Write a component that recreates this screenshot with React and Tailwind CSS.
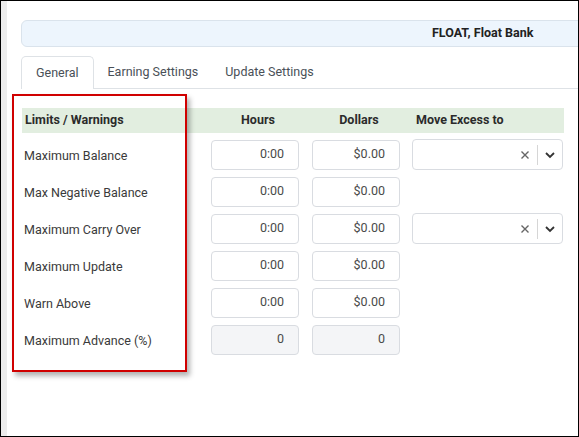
const rows = [
  { label: "Maximum Balance", hours: "0:00", dollars: "$0.00", select: true },
  { label: "Max Negative Balance", hours: "0:00", dollars: "$0.00" },
  { label: "Maximum Carry Over", hours: "0:00", dollars: "$0.00", select: true },
  { label: "Maximum Update", hours: "0:00", dollars: "$0.00" },
  { label: "Warn Above", hours: "0:00", dollars: "$0.00" },
  { label: "Maximum Advance (%)", hours: "0", dollars: "0", disabled: true },
];

const Field = ({ value, disabled }) => (
  <div
    className={`w-[88px] h-[30px] flex items-center justify-end pr-[14px] rounded-[4px] border border-[#d9dce1] text-[12.5px] text-[#4a4a4a] ${
      disabled ? "bg-[#f4f5f7]" : "bg-white"
    }`}
  >
    {value}
  </div>
);

const ExcessSelect = () => (
  <div className="w-[151px] h-[31px] flex items-center justify-end rounded-[4px] border border-[#d9dce1] bg-white">
    <svg width="10" height="10" viewBox="0 0 10 10" className="mr-[7px]">
      <path d="M1.5 1.5 L8.5 8.5 M8.5 1.5 L1.5 8.5" stroke="#666" strokeWidth="1.4" />
    </svg>
    <div className="w-px h-[20px] bg-[#d6d6d6]" />
    <svg width="12" height="8" viewBox="0 0 12 8" className="mx-[6px]">
      <path d="M2 2 L6 6 L10 2" stroke="#333" strokeWidth="1.8" fill="none" />
    </svg>
  </div>
);

export default function App() {
  return (
    <div
      className="relative w-[579px] h-[437px] border border-black bg-white overflow-hidden flex"
      style={{ fontFamily: "Roboto, 'Liberation Sans', sans-serif" }}
    >
      <div className="w-[6px] shrink-0 bg-[#ececec]" />
      <div className="flex-1 pl-[14px] pt-[19px] overflow-hidden">
        <div className="w-[600px] h-[27px] flex items-center pl-[410px] rounded-[6px] border border-[#dae3ec] bg-[#edf5fd] text-[12.5px] font-bold text-[#222]">
          FLOAT, Float Bank
        </div>

        <div className="mt-[9px] flex items-end border-b border-[#dee2e6] w-[600px]">
          <div className="h-[33px] px-[14px] flex items-center border border-b-0 border-[#dee2e6] rounded-t-[5px] bg-white text-[12.5px] text-[#495057] -mb-px">
            General
          </div>
          <div className="h-[32px] pl-[14px] pr-[13px] flex items-center text-[12.5px] text-[#495057]">
            Earning Settings
          </div>
          <div className="h-[32px] px-[14px] flex items-center text-[12.5px] text-[#495057]">
            Update Settings
          </div>
        </div>

        <div className="mt-[19px] ml-[1px] w-[542px]">
          <div className="h-[25px] flex items-center bg-[#e2eee0] text-[12.5px] font-bold text-[#2b2b2b]">
            <div className="w-[189px] pl-[3px]">Limits / Warnings</div>
            <div className="w-[88px] pl-[6px] text-center">Hours</div>
            <div className="w-[88px] ml-[13px] pl-[6px] text-center">Dollars</div>
            <div className="ml-[16px]">Move Excess to</div>
          </div>
          <div className="mt-[3px]">
            {rows.map((r) => (
              <div key={r.label} className="h-[37px] flex items-center">
                <div className="w-[189px] pl-[2px] pt-[3px] text-[12.5px] text-[#3a3a3a]">{r.label}</div>
                <Field value={r.hours} disabled={r.disabled} />
                <div className="ml-[13px]">
                  <Field value={r.dollars} disabled={r.disabled} />
                </div>
                {r.select && (
                  <div className="ml-[12px]">
                    <ExcessSelect />
                  </div>
                )}
              </div>
            ))}
          </div>
        </div>
      </div>

      {/* highlight annotation */}
      <div className="absolute left-[11px] top-[93px] w-[175px] h-[278px] border-2 border-[#d00000] shadow-[3px_4px_5px_rgba(0,0,0,0.3)]" />
    </div>
  );
}
